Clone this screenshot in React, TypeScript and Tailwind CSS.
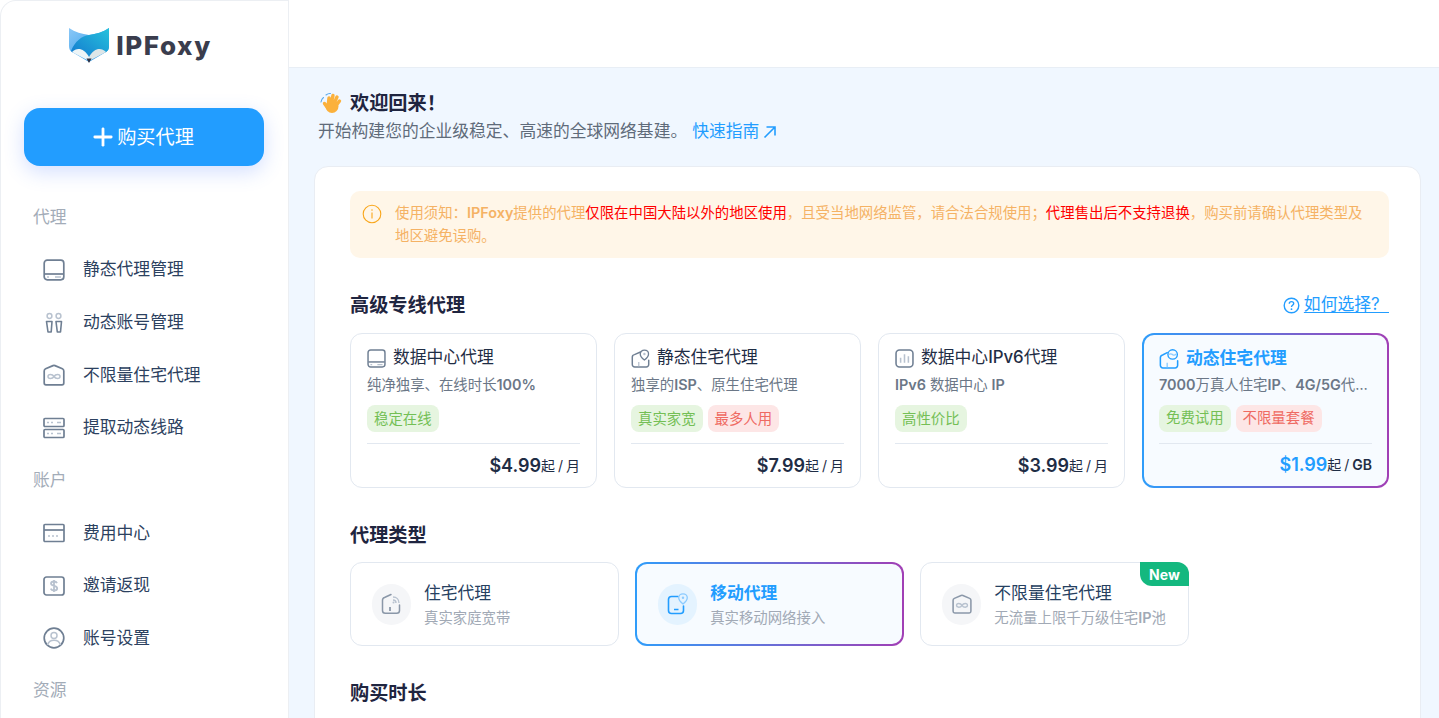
import type { ReactNode } from "react";
import { Plus } from "lucide-react";

const G = "#6f7f93";
const L = "#b8c2cf";

function Svg({ size = 22, children }: { size?: number; children: ReactNode }) {
  return (
    <svg width={size} height={size} viewBox="0 0 22 22" fill="none" className="shrink-0">
      {children}
    </svg>
  );
}

function DriveIcon({ size, c = G }: { size?: number; c?: string }) {
  return (
    <Svg size={size}>
      <rect x="1.2" y="1.2" width="19.6" height="19.6" rx="3" stroke={c} strokeWidth="1.7" />
      <path d="M1.5 15h19" stroke={c} strokeWidth="1.7" />
      <path d="M4 18h2M12 18h6" stroke={L} strokeWidth="1.4" />
    </Svg>
  );
}

function PinsIcon() {
  return (
    <Svg>
      <circle cx="6.5" cy="4" r="2.4" stroke={L} strokeWidth="1.5" />
      <circle cx="15.5" cy="4" r="2.4" stroke={L} strokeWidth="1.5" />
      <path d="M3.5 9.5h5.5l-.8 10.5H5z" stroke={G} strokeWidth="1.6" strokeLinejoin="round" />
      <path d="M13 9.5h5.5L17.500 20h-3.200z" stroke={G} strokeWidth="1.6" strokeLinejoin="round" />
    </Svg>
  );
}

function InfinityHomeIcon({ size, c = G }: { size?: number; c?: string }) {
  return (
    <Svg size={size}>
      <path d="M1.200 7Q1.200 5.500 2.600 4.800L10 1.600Q11 1.200 12 1.600L19.400 4.800Q20.800 5.500 20.800 7V19a1.800 1.800 0 0 1-1.800 1.800H3A1.800 1.800 0 0 1 1.200 19z" stroke={c} strokeWidth="1.700" strokeLinejoin="round" />
      <path d="M11 12.500c-1.600-2.700-6-2.700-6 0s4.400 2.700 6 0c1.600-2.700 6-2.700 6 0s-4.400 2.700-6 0z" stroke={L} strokeWidth="1.500" />
    </Svg>
  );
}

function ServerIcon() {
  return (
    <Svg>
      <rect x="1" y="1.500" width="20" height="8" rx="1" stroke={G} strokeWidth="1.700" />
      <rect x="1" y="12.500" width="20" height="8" rx="1" stroke={G} strokeWidth="1.700" />
      <path d="M4 5.500h2M8 5.500h2M14 5.500h4M4 16.500h2M8 16.500h2M14 16.500h4" stroke={L} strokeWidth="1.400" />
    </Svg>
  );
}

function CardIcon() {
  return (
    <Svg>
      <rect x="1" y="2.500" width="20" height="17" rx="1" stroke={G} strokeWidth="1.700" />
      <path d="M1 8h20" stroke={G} strokeWidth="1.700" />
      <path d="M5 14h2M9 14h2M13 14h2" stroke={L} strokeWidth="1.500" />
    </Svg>
  );
}

function DollarIcon() {
  return (
    <Svg>
      <rect x="1" y="2" width="20" height="18" rx="2.500" stroke={G} strokeWidth="1.700" />
      <path d="M14 8.200c-.5-1.200-1.600-1.700-3-1.700-1.600 0-3 .7-3 2.100 0 3.100 6.200 1.400 6.200 4.600 0 1.500-1.500 2.300-3.200 2.300-1.500 0-2.800-.6-3.300-1.900M11 5v12" stroke={L} strokeWidth="1.800" />
    </Svg>
  );
}

function UserIcon() {
  return (
    <Svg>
      <circle cx="11" cy="11" r="9.800" stroke={G} strokeWidth="1.700" />
      <circle cx="11" cy="8.500" r="3" stroke={L} strokeWidth="1.500" />
      <path d="M4.500 18c1-3.500 3.500-4.800 6.500-4.800s5.500 1.300 6.500 4.800" stroke={L} strokeWidth="1.500" />
    </Svg>
  );
}

function PinHomeIcon({ c = G, accent = L, size = 20 }: { c?: string; accent?: string; size?: number }) {
  return (
    <Svg size={size}>
      <path d="M11 3.500 4 6.500A3 3 0 0 0 1.500 9.500V18A2.800 2.800 0 0 0 4.300 20.800H17.700A2.800 2.800 0 0 0 20.500 18V13" stroke={c} strokeWidth="1.700" strokeLinecap="round" />
      <path d="M15.500 1.200c-2.800 0-4.800 2-4.800 4.600 0 2.800 3.200 5.800 4.800 7 1.600-1.200 4.800-4.200 4.800-7 0-2.600-2-4.600-4.800-4.600z" stroke={c} strokeWidth="1.500" />
      <circle cx="15.500" cy="5.800" r="1.400" fill={accent} />
      <path d="M9 15v5" stroke={accent} strokeWidth="1.500" />
    </Svg>
  );
}

function BarsIcon() {
  return (
    <Svg size={19}>
      <rect x="1.200" y="1.200" width="19.600" height="19.600" rx="4" stroke={G} strokeWidth="1.800" />
      <path d="M6.500 10v6M11 6v10M15.500 8.500V16" stroke={L} strokeWidth="1.800" />
    </Svg>
  );
}

function GlobeHomeIcon() {
  const c = "#229dff";
  return (
    <Svg size={20}>
      <path d="M9 4 4 6.500A3 3 0 0 0 1.500 9.500V18A2.800 2.800 0 0 0 4.300 20.800H17.700A2.800 2.800 0 0 0 20.500 18V13" stroke={c} strokeWidth="1.700" strokeLinecap="round" />
      <circle cx="15" cy="6" r="5.200" stroke={c} strokeWidth="1.500" />
      <path d="M11 6c2-1.500 3-.5 4.500.5s2.500 0 3.500-1" stroke="#8ccbff" strokeWidth="1.400" />
      <path d="M9 15v5" stroke="#8ccbff" strokeWidth="1.500" />
    </Svg>
  );
}

function WifiHomeIcon() {
  return (
    <Svg size={22}>
      <path d="M10 1.500 3.500 4.500A3 3 0 0 0 1.500 7.500V17.500A2.800 2.800 0 0 0 4.300 20.300H15.700A2.800 2.800 0 0 0 18.500 17.500V12" stroke={G} strokeWidth="1.500" strokeLinecap="round" opacity=".8" />
      <path d="M12 4c3.500 0 6 2.500 6 6M12 7c1.800 0 3 1.200 3 3" stroke={L} strokeWidth="1.400" />
      <circle cx="12.500" cy="9.500" r="1" fill={L} />
      <path d="M9 14v4" stroke={G} strokeWidth="1.400" />
    </Svg>
  );
}

function MobilePinIcon() {
  const c = "#229dff";
  return (
    <Svg size={22}>
      <path d="M11 3.500H4.500A3 3 0 0 0 1.500 6.500V17.500A3 3 0 0 0 4.500 20.500H13.500A3 3 0 0 0 16.500 17.500V13" stroke={c} strokeWidth="1.600" strokeLinecap="round" />
      <path d="M7 16.500h4.500" stroke={c} strokeWidth="1.500" />
      <path d="M16 .8c-2.500 0-4.300 1.800-4.300 4 0 2.500 2.800 5 4.300 6.200 1.500-1.200 4.300-3.700 4.300-6.200 0-2.200-1.800-4-4.300-4z" stroke="#8ccbff" strokeWidth="1.300" />
      <circle cx="16" cy="4.800" r="1.200" fill="#8ccbff" />
    </Svg>
  );
}

function Logo() {
  return (
    <div className="flex items-center gap-[6px]">
      <svg width="41" height="35" viewBox="0 0 41 35" fill="none">
        <defs>
          <linearGradient id="foxA" x1="0" y1="0" x2="1" y2="1">
            <stop offset="0" stopColor="#8cc8f7" />
            <stop offset="1" stopColor="#1f94e6" />
          </linearGradient>
          <linearGradient id="foxB" x1="0" y1="1" x2="1" y2="0">
            <stop offset="0" stopColor="#1378cf" />
            <stop offset="1" stopColor="#27c2dc" />
          </linearGradient>
        </defs>
        <path d="M0 0C6 4 13 6 20 7 27 6 34 4 40 0V18C40 21 39 23 37 24L20 34 3 24C1 23 0 21 0 18Z" fill="url(#foxA)" />
        <path d="M2 23C6 13 13 8 20 7 27 6 34 4 40 0V18C40 21 39 23 37 24L20 30 3 24Z" fill="url(#foxB)" />
        <path d="M3 24C8 19 15 20 20 29V33Z" fill="#eef5f7" />
        <path d="M37 24C32 19 25 20 20 29V33Z" fill="#dde6e8" />
        <path d="M17.500 30.500h5L20 35z" fill="#2f3345" />
      </svg>
      <span className="text-[26px] leading-none font-extrabold tracking-[1.600px] text-[#3a3d4d]">IPFoxy</span>
    </div>
  );
}

function NavLabel({ children }: { children: ReactNode }) {
  return <div className="flex h-[52.500px] items-center pl-[32px] text-[16.800px] text-[#a3acb8]">{children}</div>;
}

function NavItem({ icon, label }: { icon: ReactNode; label: string }) {
  return (
    <div className="flex h-[52.700px] items-center gap-[18px] pl-[42px] text-[16.800px] text-[#2c4160]">
      {icon}
      <span>{label}</span>
    </div>
  );
}

function Sidebar() {
  return (
    <aside className="flex h-full w-[289px] shrink-0 flex-col overflow-hidden rounded-tl-[16px] border-t border-r border-l border-[#eceff3] bg-white">
      <div className="flex justify-center pt-[27px] pr-[8px]">
        <Logo />
      </div>
      <div className="mt-[45px] mr-[24px] ml-[23px] flex h-[58px] items-center justify-center rounded-[16px] bg-[#229dff] pr-[5px] text-[19.200px] text-white shadow-[0_6px_20px_rgba(60,110,255,0.22)]">
        <Plus size={28} strokeWidth={2.4} />
        购买代理
      </div>
      <div className="mt-[25px]">
        <NavLabel>代理</NavLabel>
        <NavItem icon={<DriveIcon />} label="静态代理管理" />
        <NavItem icon={<PinsIcon />} label="动态账号管理" />
        <NavItem icon={<InfinityHomeIcon />} label="不限量住宅代理" />
        <NavItem icon={<ServerIcon />} label="提取动态线路" />
        <NavLabel>账户</NavLabel>
        <NavItem icon={<CardIcon />} label="费用中心" />
        <NavItem icon={<DollarIcon />} label="邀请返现" />
        <NavItem icon={<UserIcon />} label="账号设置" />
        <NavLabel>资源</NavLabel>
      </div>
    </aside>
  );
}

function Tag({ red, children }: { red?: boolean; children: ReactNode }) {
  return (
    <span className={`flex h-[27px] shrink-0 items-center justify-center rounded-[8px] px-[7px] text-[14.400px] whitespace-nowrap ${red ? "bg-[#fde6e6] text-[#ef6a62]" : "bg-[#e6f5e0] text-[#74bf55]"}`}>
      {children}
    </span>
  );
}

function En({ children }: { children: ReactNode }) {
  return <span className="font-semibold">{children}</span>;
}

const activeBox =
  "border-2 border-transparent [background:linear-gradient(#f7fbff,#f7fbff)_padding-box,linear-gradient(90deg,#2f9dfa,#a13fb5)_border-box]";

type Plan = {
  icon: ReactNode;
  title: ReactNode;
  desc: ReactNode;
  tags: { text: string; red?: boolean }[];
  price: string;
  unit: ReactNode;
  active?: boolean;
};

const plans: Plan[] = [
  {
    icon: <DriveIcon size={19} />,
    title: "数据中心代理",
    desc: <>纯净独享、在线时长<En>100%</En></>,
    tags: [{ text: "稳定在线" }],
    price: "$4.99",
    unit: "月",
  },
  {
    icon: <PinHomeIcon size={19} />,
    title: "静态住宅代理",
    desc: <>独享的<En>ISP</En>、原生住宅代理</>,
    tags: [{ text: "真实家宽" }, { text: "最多人用", red: true }],
    price: "$7.99",
    unit: "月",
  },
  {
    icon: <BarsIcon />,
    title: <>数据中心<span className="font-medium">IPv6</span>代理</>,
    desc: <><En>IPv6</En> 数据中心 <En>IP</En></>,
    tags: [{ text: "高性价比" }],
    price: "$3.99",
    unit: "月",
  },
  {
    icon: <GlobeHomeIcon />,
    title: "动态住宅代理",
    desc: <><En>7000</En>万真人住宅<En>IP</En>、<En>4G/5G</En>代理全球覆盖</>,
    tags: [{ text: "免费试用" }, { text: "不限量套餐", red: true }],
    price: "$1.99",
    unit: <En>GB</En>,
    active: true,
  },
];

function PlanCard({ plan }: { plan: Plan }) {
  return (
    <div className={`flex h-[155px] min-w-0 flex-col rounded-[12px] ${plan.active ? `px-[15px] ${activeBox}` : "border border-[#e2e8f0] bg-white px-[16px]"}`}>
      <div className="mt-[14px] flex h-[20px] items-center gap-[7px]">
        {plan.icon}
        <span className={`text-[16.800px] whitespace-nowrap ${plan.active ? "font-bold text-[#229dff]" : "text-[#1f2d45]"}`}>{plan.title}</span>
      </div>
      <div className={`truncate text-[14.400px] leading-[20px] text-[#6b7787] ${plan.active ? "mt-[6px]" : "mt-[7px]"}`}>{plan.desc}</div>
      <div className="mt-[10px] flex gap-[5px]">
        {plan.tags.map((t) => (
          <Tag key={t.text} red={t.red}>{t.text}</Tag>
        ))}
      </div>
      <div className="mt-[11px] flex h-[44px] items-center justify-end border-t border-[#e2e8f0] text-[14px] [word-spacing:-1px] text-[#1f2d45]">
        <span className={`text-[18px] font-semibold ${plan.active ? "text-[#229dff]" : ""}`}>{plan.price}</span>
        <span>起 / {plan.unit}</span>
      </div>
    </div>
  );
}

function TypeCard({ icon, title, sub, active, badge }: { icon: ReactNode; title: string; sub: ReactNode; active?: boolean; badge?: boolean }) {
  return (
    <div className={`relative flex h-[84px] min-w-0 items-center gap-[13px] rounded-[12px] pl-[21px] ${active ? activeBox : "border border-[#e2e8f0] bg-white"}`}>
      <div className={`flex h-[41px] w-[39px] shrink-0 items-center justify-center rounded-full ${active ? "bg-[#e4f3ff]" : "bg-[#f5f6f8]"}`}>{icon}</div>
      <div>
        <div className={`text-[16.800px] leading-[24px] ${active ? "font-bold text-[#229dff]" : "text-[#26405f]"}`}>{title}</div>
        <div className="mt-[3px] text-[14.400px] leading-[20px] whitespace-nowrap text-[#a1a9b5]">{sub}</div>
      </div>
      {badge && (
        <span className="absolute -top-px -right-px flex h-[24px] w-[49px] items-center justify-center rounded-tr-[12px] rounded-bl-[12px] bg-[#14b87f] text-[14px] font-bold text-white">
          New
        </span>
      )}
    </div>
  );
}

function Hand() {
  return (
    <svg width="22" height="22" viewBox="0 0 22 22" fill="none" className="shrink-0">
      <circle cx="12" cy="14.500" r="6.500" fill="#fbb13c" />
      <path d="M8.500 11 9 6M11.500 10 13 3.500M14.500 10.500 17 5M16.500 13 19.500 9M7 15 4.500 11.500" stroke="#fbb13c" strokeWidth="3.400" strokeLinecap="round" />
      <path d="M6 3C7.500 1.800 9 1.300 10.500 1.500M1 10C1.300 8 2.300 6.500 3.500 5.500" stroke="#5aa9ec" strokeWidth="1.100" strokeLinecap="round" />
    </svg>
  );
}

function Main() {
  return (
    <main className="flex min-w-0 flex-1 flex-col">
      <header className="h-[68px] shrink-0 border-b border-[#e8eef5] bg-white" />
      <div className="flex-1 overflow-hidden bg-[#f0f7ff] pr-[18px] pl-[25px]">
        <div className="mt-[23px] ml-[6px] flex h-[24px] items-center gap-[8px] text-[19.200px] font-bold text-[#1f2540]">
          <Hand />
          欢迎回来！
        </div>
        <div className="mt-[5px] ml-[4px] flex h-[24px] items-center text-[16.800px] text-[#5f6b7a]">
          开始构建您的企业级稳定、高速的全球网络基建。
          <span className="ml-[5px] flex items-center gap-[4px] text-[#229dff]">
            快速指南
            <svg width="14" height="14" viewBox="0 0 14 14" fill="none">
              <path d="M1.500 12.500 12 2M3.500 2H12V10.500" stroke="#229dff" strokeWidth="1.600" />
            </svg>
          </span>
        </div>
        <section className="mt-[22px] rounded-t-[14px] border border-[#e9edf3] bg-white pt-[24px] pr-[31px] pb-[40px] pl-[35px]">
          <div className="flex h-[67px] rounded-[10px] bg-[#fff6e8] pt-[10px] pr-[24px] pl-[12px] text-[14.400px] leading-[23px] text-[#f5b264]">
            <svg width="20" height="20" viewBox="0 0 20 20" fill="none" className="mt-[3px] shrink-0">
              <circle cx="10" cy="10" r="8.800" stroke="#f9a61a" strokeWidth="1.100" />
              <path d="M10 8.500v6M10 5.300v1.400" stroke="#f9a61a" strokeWidth="1.100" />
            </svg>
            <p className="ml-[13px]">
              使用须知：<En>IPFoxy</En>提供的代理<span className="text-[#ff0000]">仅限在中国大陆以外的地区使用</span>，且受当地网络监管，请合法合规使用；<span className="text-[#ff0000]">代理售出后不支持退换</span>，购买前请确认代理类型及地区避免误购。
            </p>
          </div>

          <div className="mt-[35px] flex h-[24px] items-center justify-between">
            <h2 className="text-[19.200px] font-bold text-[#1f2540]">高级专线代理</h2>
            <div className="flex items-center gap-[4px] text-[16.800px] text-[#229dff]">
              <svg width="17" height="17" viewBox="0 0 17 17" fill="none">
                <circle cx="8.500" cy="8.500" r="7.300" stroke="#229dff" strokeWidth="1.400" />
                <path d="M6.300 6.700c0-1.300 1-2.100 2.200-2.100s2.200.8 2.200 2c0 1.700-2.200 1.700-2.200 3.300" stroke="#229dff" strokeWidth="1.400" />
                <circle cx="8.500" cy="12.200" r=".9" fill="#229dff" />
              </svg>
              <span className="underline underline-offset-2">如何选择?&nbsp;&nbsp;</span>
            </div>
          </div>

          <div className="mt-[16px] grid grid-cols-4 gap-[17px]">
            {plans.map((p, i) => (
              <PlanCard key={i} plan={p} />
            ))}
          </div>

          <h2 className="mt-[35px] h-[24px] text-[19.200px] leading-[24px] font-bold text-[#1f2540]">代理类型</h2>
          <div className="mt-[15px] grid w-[839px] grid-cols-3 gap-[16.500px]">
            <TypeCard icon={<WifiHomeIcon />} title="住宅代理" sub="真实家庭宽带" />
            <TypeCard icon={<MobilePinIcon />} title="移动代理" sub="真实移动网络接入" active />
            <TypeCard
              icon={<InfinityHomeIcon size={20} c="#8b98a9" />}
              title="不限量住宅代理"
              sub={<>无流量上限千万级住宅<En>IP</En>池</>}
              badge
            />
          </div>

          <h2 className="mt-[35px] h-[24px] text-[19.200px] leading-[24px] font-bold text-[#1f2540]">购买时长</h2>
        </section>
      </div>
    </main>
  );
}

export default function App() {
  return (
    <div className="flex h-screen overflow-hidden bg-white font-['Inter','Noto_Sans_CJK_SC',sans-serif]">
      <Sidebar />
      <Main />
    </div>
  );
}
